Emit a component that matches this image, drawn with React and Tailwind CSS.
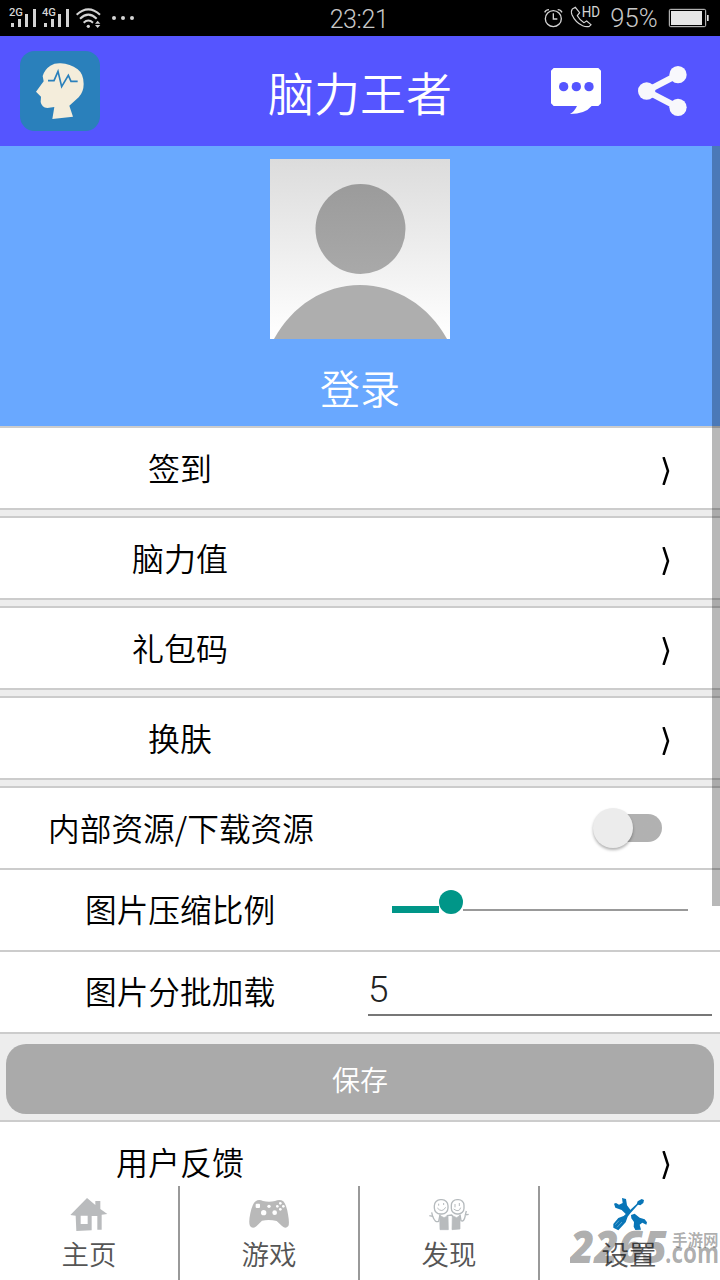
import React, { useState } from "react";

const menuItems = ["签到", "脑力值", "礼包码", "换肤"];

const StatusIconsLeft = () => (
  <svg className="h-9 w-36" viewBox="0 0 432 108" fill="#d4d4d4">
    <text x="27" y="48" fontSize="30" fontWeight="500" fontFamily="Roboto, sans-serif" textLength="42" lengthAdjust="spacingAndGlyphs">2G</text>
    <path d="M33 69h9v12h-9zM54 57h9v24h-9zM75 42h9v39h-9zM99 27h9v54h-9z" />
    <text x="126" y="48" fontSize="30" fontWeight="500" fontFamily="Roboto, sans-serif" textLength="42" lengthAdjust="spacingAndGlyphs">4G</text>
    <path d="M132 69h9v12h-9zM153 57h9v24h-9zM174 42h9v39h-9zM198 27h9v54h-9z" />
    <g fill="none" stroke="#d4d4d4" strokeWidth="6">
      <path d="M230 44Q265 12 300 44M240 56Q265 32 290 56M251 68Q265 55 279 68" />
    </g>
    <circle cx="265" cy="79" r="5" />
    <path d="M285 71l8-9 8 9zM285 75l8 9 8-9z" />
    <circle cx="342" cy="54" r="6" />
    <circle cx="369" cy="54" r="6" />
    <circle cx="396" cy="54" r="6" />
  </svg>
);

const StatusIconsRight = () => (
  <svg className="h-9 w-[180px]" viewBox="180 0 540 108" fill="none" stroke="#d4d4d4" strokeWidth="4">
    <circle cx="220" cy="56" r="24" />
    <path d="M220 40v17h12M194 37q4-8 13-8M233 29q9 0 13 8" />
    <path
      d="M277 27l9-5 13 16-7 9q8 14 20 21l8-5 13 11-5 5q-10 2-20-2-22-10-32-33-4-10 1-17z"
      strokeWidth="3.5"
    />
    <text x="305" y="52" fontSize="43" fontFamily="Roboto, sans-serif" fontWeight="400" fill="#d4d4d4" stroke="none" textLength="55" lengthAdjust="spacingAndGlyphs">HD</text>
    <text x="391" y="80" fontSize="75" fontFamily="Roboto, sans-serif" fontWeight="350" fill="#c8c8c8" stroke="none" textLength="142" lengthAdjust="spacingAndGlyphs">95%</text>
    <rect x="568" y="28" width="109" height="52" rx="4" strokeWidth="3" />
    <path d="M573 33h93v42h-93zM681 45h5v18h-5z" fill="#e6e6e6" stroke="none" />
  </svg>
);

const Logo = () => (
  <svg className="h-20 w-20" viewBox="60 153 240 240">
    <rect x="60" y="153" width="240" height="240" rx="44" fill="#2a80bb" />
    <path
      d="M131 244L128 228Q134 208 151 197Q164 189 182 190Q210 191 233 208Q251 222 251 252Q251 276 236 292L208 317L219 350L157 357L163 321L142 324Q125 323 122 306L123 290L108 275Z"
      fill="#f4eddb"
    />
    <path d="M144 242H162L174 214L185 260L205 226L213 244H233" fill="none" stroke="#2a80bb" strokeWidth="5" />
  </svg>
);

const ChatIcon = () => (
  <svg className="h-[46px] w-[50px]" viewBox="213 204 150 138">
    <path d="M221 204H355L363 212V310L355 318H335Q315 342 270 342Q284 334 291 318H221L213 310V212Z" fill="#fff" />
    <g fill="#5555ff">
      <circle cx="251" cy="260" r="14" />
      <circle cx="289" cy="260" r="14" />
      <circle cx="327" cy="260" r="14" />
    </g>
  </svg>
);

const ShareIcon = () => (
  <svg className="h-[50px] w-[49px]" viewBox="473 198 147 150" fill="#f8f8fc">
    <path d="M593 224L499 273L593 322" fill="none" stroke="#f8f8fc" strokeWidth="19" />
    <circle cx="499" cy="273" r="26" />
    <circle cx="593" cy="224" r="26" />
    <circle cx="593" cy="322" r="26" />
  </svg>
);

const Avatar = () => (
  <svg className="h-[180px] w-[180px]" viewBox="0 0 180 180">
    <defs>
      <linearGradient id="avatarBg" x1="0" y1="0" x2="0" y2="1">
        <stop offset="0" stopColor="#dcdcdc" />
        <stop offset="1" stopColor="#ffffff" />
      </linearGradient>
      <linearGradient id="avatarHead" x1="0" y1="0" x2="0" y2="1">
        <stop offset="0" stopColor="#9b9b9b" />
        <stop offset="1" stopColor="#a9a9a9" />
      </linearGradient>
    </defs>
    <rect width="180" height="180" fill="url(#avatarBg)" />
    <circle cx="90.500" cy="70" r="45" fill="url(#avatarHead)" />
    <path d="M4 180C22 147 54 126 90 126S159 147 177 180Z" fill="#aeaeae" />
  </svg>
);

const Chevron = () => (
  <svg className="mr-[50px] mt-1.5 h-7 w-2" viewBox="0 0 8 28" fill="none" stroke="#000" strokeWidth="2.5">
    <path d="M1.500 0L6 14L1.500 28" />
  </svg>
);

const HouseIcon = () => (
  <svg className="h-10 w-10" viewBox="208 525 120 120" fill="#b9bbbd">
    <path
      fillRule="evenodd"
      d="M212 585L262 534L287 555V543H302V567L323 582L306 584V629H293V588H276V631L230 633L228 587ZM243 587V612H264V587Z"
    />
  </svg>
);

const GamepadIcon = () => (
  <svg className="h-10 w-10" viewBox="747 525 120 120">
    <path
      d="M767 544Q776 537 789 543Q807 548 825 543Q840 537 850 544Q859 553 864 583Q869 611 865 618Q857 628 846 618L830 603Q807 597 786 602L770 618Q758 629 750 618Q745 608 751 580Q757 551 767 544Z"
      fill="#b9b9b9"
    />
    <g fill="#fff">
      <rect x="767" y="551" width="13" height="13" rx="3" />
      <circle cx="791" cy="578" r="8" />
      <circle cx="824" cy="578" r="7" />
      <circle cx="807" cy="559" r="5" />
      <circle cx="841" cy="550" r="4" />
      <circle cx="841" cy="568" r="4" />
      <circle cx="832" cy="559" r="4" />
      <circle cx="850" cy="559" r="4" />
    </g>
  </svg>
);

const FriendsIcon = () => (
  <svg className="h-10 w-10" viewBox="207 525 120 120" fill="none" stroke="#b5babd" strokeWidth="4">
    <rect x="223" y="539" width="41" height="43" rx="18" />
    <rect x="274" y="539" width="38" height="43" rx="17" />
    <path d="M236 551v6M251 549v6M232 564Q246 580 257 562M285 552v10M298 549v9M281 567Q297 579 302 563" strokeWidth="3" />
    <path d="M208 587L218 589L215 577M218 589Q225 609 236 604L240 584M326 583L316 585L319 573M316 587Q312 607 303 602L300 584M260 587L275 585L279 590" />
    <path d="M239 586L252 593L264 587L265 629H240ZM277 587L290 593L300 586V627L276 629Z" fill="#b8bbbd" strokeWidth="2" />
  </svg>
);

const ToolsIcon = () => (
  <svg className="h-10 w-10" viewBox="747 525 120 120" fill="#0875b7">
    <path d="M786 534L798 537L801 556L811 569L808 580L798 583L785 570L766 563L762 551L768 549L777 554L788 549Z" />
    <path d="M833 544L845 537L852 540L850 549L841 556L834 554L811 580L803 590L797 607L775 631L760 623V612L775 594L791 588L830 552Z" />
    <path d="M813 585L824 581L839 593L854 598L861 607L859 614L847 608L839 614L843 629L826 630L821 620L822 606L814 595Z" />
    <path d="M766 614L777 602M771 622L786 606" stroke="#fff" strokeWidth="1" />
  </svg>
);

const tabs = [
  { title: "主页", icon: HouseIcon },
  { title: "游戏", icon: GamepadIcon },
  { title: "发现", icon: FriendsIcon },
  { title: "设置", icon: ToolsIcon },
];

const MenuRow = ({ title }) => (
  <div className="flex h-[84px] items-center justify-between border-y-2 border-[#cccccc] bg-white">
    <p className="w-[360px] pb-0.5 text-center">{title}</p>
    <Chevron />
  </div>
);

const Watermark = () => (
  <div className="pointer-events-none absolute left-[570px] top-[1226px] h-[54px] w-[150px]">
    <svg className="h-full w-full" viewBox="0 0 150 54" fill="#000" fillOpacity="0.32">
      <text x="0" y="37" fontFamily="'Open Sans', sans-serif" fontWeight="800" fontStyle="italic" fontSize="44" textLength="97" lengthAdjust="spacingAndGlyphs">2265</text>
      <text x="95" y="36.500" fontFamily="'Open Sans', sans-serif" fontWeight="700" fontSize="28" textLength="54" lengthAdjust="spacingAndGlyphs">.com</text>
      <text x="102" y="20" fontFamily="'Noto Sans CJK SC', sans-serif" fontWeight="700" fontSize="15.500">手游网</text>
    </svg>
  </div>
);

const App = () => {
  const [batchSize, setBatchSize] = useState("5");

  return (
    <div className="relative flex h-[1280px] w-[720px] flex-col overflow-hidden bg-[#ededed] font-['Noto_Sans_CJK_SC',sans-serif] text-[32px] font-[350] leading-none text-black">
      <div className="grid h-9 shrink-0 grid-cols-3 items-center bg-black text-[#c8c8c8]">
        <StatusIconsLeft />
        <p className="pt-0.5 pr-0.5 text-center font-['Roboto',sans-serif] text-[25px] tracking-[-0.4px]">23:21</p>
        <div className="flex justify-end">
          <StatusIconsRight />
        </div>
      </div>

      <header className="flex h-[110px] shrink-0 items-center bg-[#5555ff] px-5 text-white">
        <Logo />
        <h1 className="ml-[160px] w-[200px] text-center text-[46px]">脑力王者</h1>
        <div className="ml-[91px] flex items-center gap-[37px]">
          <ChatIcon />
          <ShareIcon />
        </div>
      </header>

      <div className="flex h-[280px] shrink-0 flex-col items-center bg-[#69a8ff] pt-[13px] text-white">
        <Avatar />
        <p className="mt-7 text-[40px]">登录</p>
      </div>

      <div className="flex shrink-0 flex-col gap-1.5">
        {menuItems.map((title) => (
          <MenuRow key={title} title={title} />
        ))}
        <div className="flex h-[84px] items-center justify-between border-y-2 border-[#cccccc] bg-white">
          <p className="w-[360px] pl-0.5 text-center text-[31.7px]">内部资源/下载资源</p>
          <div className="mr-[58px] flex h-7 w-[69px] items-center rounded-full bg-linear-to-r from-transparent from-30% to-[#b1b1b1] to-30%">
            <div className="h-10 w-10 shrink-0 rounded-full bg-[#ececec] shadow-[0_2px_3px_rgba(0,0,0,0.3)]"></div>
          </div>
        </div>
      </div>

      <div className="flex h-[82px] shrink-0 items-center border-b-2 border-[#cccccc] bg-white">
        <p className="w-[360px] pb-0.5 text-center text-[31.7px]">图片压缩比例</p>
        <div className="ml-8 flex h-6 w-[296px] -translate-y-2 items-start">
          <div className="mt-4 h-[7px] w-[47px] bg-[#009688]"></div>
          <div className="h-6 w-6 rounded-full bg-[#009688]"></div>
          <div className="mt-[19px] h-0.5 flex-1 bg-[#999999]"></div>
        </div>
      </div>

      <div className="flex h-[82px] shrink-0 items-center border-b-2 border-[#cccccc] bg-white">
        <p className="w-[360px] pb-0.5 text-center text-[31.7px]">图片分批加载</p>
        <input
          className="ml-2 h-12 w-[344px] border-b-2 border-[#777777] pb-1 font-['Roboto',sans-serif] text-[37px] font-light text-[#222222] outline-none"
          value={batchSize}
          onChange={(e) => setBatchSize(e.target.value)}
        />
      </div>

      <div className="h-[86px] shrink-0 px-1.5 pt-2.5">
        <button className="h-[70px] w-full rounded-[20px] bg-[#aaaaaa] text-[28px] text-white">保存</button>
      </div>

      <div className="flex h-[66px] shrink-0 justify-between overflow-hidden border-t-2 border-[#cccccc] bg-white pt-[23px]">
        <p className="w-[360px] text-center">用户反馈</p>
        <Chevron />
      </div>

      <nav className="grid h-[94px] shrink-0 grid-cols-4 bg-white">
        {tabs.map((tab) => (
          <div
            key={tab.title}
            className="flex flex-col items-center border-r-2 border-[#999999] pt-[9px] text-[27.5px] text-[#555555] last:border-r-0 last:pr-0.5"
          >
            <tab.icon />
            <p className="mt-[5px]">{tab.title}</p>
          </div>
        ))}
      </nav>

      <div className="absolute right-0 top-[146px] h-[760px] w-2 bg-black/28"></div>
      <Watermark />
    </div>
  );
};

export default App;
